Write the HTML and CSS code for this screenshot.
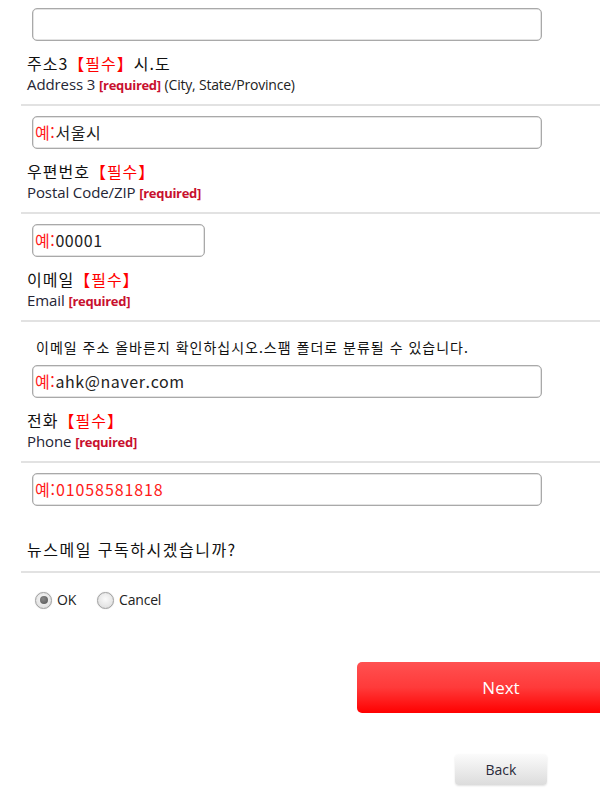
FILE: index.html
```html
<!DOCTYPE html>
<html lang="ko">
<head>
<meta charset="utf-8">
<link rel="stylesheet" href="styles.css">
</head>
<body>
<div class="page">
  <div class="field first"><div class="box wide"></div></div>
  <div class="label">
    <div class="ko">주소3<span class="req">【필수】</span>시.도</div>
    <div class="en">Address 3 <b class="req-en">[required]</b> <span class="hint">(City, State/Province)</span></div>
  </div>
  <div class="rule"></div>

  <div class="field"><div class="box wide"><span class="ex">예:</span>서울시</div></div>
  <div class="label">
    <div class="ko">우편번호<span class="req">【필수】</span></div>
    <div class="en">Postal Code/ZIP <b class="req-en">[required]</b></div>
  </div>
  <div class="rule"></div>

  <div class="field"><div class="box short"><span class="ex">예:</span>00001</div></div>
  <div class="label">
    <div class="ko">이메일<span class="req">【필수】</span></div>
    <div class="en">Email <b class="req-en">[required]</b></div>
  </div>
  <div class="rule"></div>

  <div class="note">이메일 주소 올바른지 확인하십시오.스팸 폴더로 분류될 수 있습니다.</div>
  <div class="field tight"><div class="box wide"><span class="ex">예:</span>ahk@naver.com</div></div>
  <div class="label">
    <div class="ko">전화<span class="req">【필수】</span></div>
    <div class="en">Phone <b class="req-en">[required]</b></div>
  </div>
  <div class="rule"></div>

  <div class="field"><div class="box wide red">예:01058581818</div></div>
  <div class="question">뉴스메일 구독하시겠습니까?</div>
  <div class="rule"></div>

  <div class="radios">
    <label class="opt"><span class="radio checked"></span>OK</label>
    <label class="opt"><span class="radio"></span>Cancel</label>
  </div>

  <div class="actions">
    <div class="btn-next">Next</div>
    <div class="btn-back">Back</div>
  </div>
</div>
</body>
</html>
```
FILE: styles.css
```css
html, body {
  margin: 0;
  padding: 0;
  background: #fff;
  overflow: hidden;
}
.page {
  width: 600px;
  height: 793px;
  padding-left: 21px;
  box-sizing: border-box;
  font-family: "Noto Sans CJK KR", sans-serif;
  color: #111;
  overflow: hidden;
}
.field {
  padding: 10px 0 0 11px;
}
.field.first {
  padding-top: 8px;
}
.field.tight {
  padding-top: 8px;
}
.box {
  height: 33px;
  box-sizing: border-box;
  border: 1px solid #a9a9a9;
  box-shadow: inset 0 0 0 0.5px #c8c8c8;
  border-radius: 5px;
  background: #fff;
  padding: 0 2px;
  font-size: 16px;
  line-height: 31px;
  color: #222;
  white-space: nowrap;
  letter-spacing: 0.6px;
}
.box.wide { width: 510px; }
.box.short { width: 173px; }
.box.red { color: #ff1a1a; letter-spacing: 0.9px; }
.ex { color: #ff1a1a; }
.label {
  padding: 12px 0 0 6px;
}
.ko {
  font-size: 16px;
  line-height: 21px;
  height: 21px;
  color: #111;
  letter-spacing: 1px;
}
.req { color: #ff0000; }
.en {
  font-family: "Open Sans", sans-serif;
  font-size: 15px;
  line-height: 20px;
  height: 20px;
  color: #252535;
  letter-spacing: -0.1px;
}
.req-en {
  font-size: 13px;
  color: #c8102e;
  font-weight: 700;
  letter-spacing: -0.3px;
}
.hint {
  font-size: 14px;
  color: #222;
  letter-spacing: -0.2px;
}
.rule {
  margin-top: 10px;
  height: 2px;
  background: #e2e2e2;
}
.note {
  padding: 15px 0 0 15px;
  font-size: 14px;
  line-height: 20px;
  color: #111;
  letter-spacing: 1px;
}
.question {
  padding: 31px 0 0 6px;
  font-size: 16px;
  line-height: 24px;
  color: #111;
  letter-spacing: 1.5px;
}
.radios {
  display: flex;
  gap: 21px;
  padding: 17px 0 0 14px;
  font-family: "Open Sans", sans-serif;
  font-size: 14px;
  color: #222;
}
.opt {
  display: flex;
  align-items: center;
  gap: 5px;
  line-height: 20px;
  letter-spacing: -0.2px;
}
.radio {
  width: 17px;
  height: 17px;
  box-sizing: border-box;
  border-radius: 50%;
  border: 1px solid #a0a0a0;
  background: radial-gradient(circle at 50% 40%, #fafafa 0%, #e6e6e6 60%, #d4d4d4 100%);
  box-shadow: 0 0 1px #bbb;
  position: relative;
}
.radio.checked::after {
  content: "";
  position: absolute;
  left: 3.5px;
  top: 3.5px;
  width: 8px;
  height: 8px;
  border-radius: 50%;
  background: radial-gradient(circle at 40% 35%, #888 0%, #555 100%);
}
.actions {
  margin-left: 336px;
  width: 243px;
  padding-top: 52px;
  overflow: hidden;
  display: flex;
  flex-direction: column;
  font-family: "Open Sans", sans-serif;
}
.btn-next {
  flex: none;
  width: 288px;
  height: 51px;
  border-radius: 5px 0 0 5px;
  background: linear-gradient(#ff5151, #ff3a3a 50%, #ff0000);
  color: #fff;
  font-size: 17px;
  line-height: 51px;
  text-align: center;
}
.btn-back {
  margin: 41px 0 3px 98px;
  width: 92px;
  height: 31px;
  border-radius: 4px;
  background: linear-gradient(#fbfbfb, #dcdcdc);
  box-shadow: 0 1px 2px rgba(0,0,0,0.12);
  color: #2a2a3a;
  font-size: 14px;
  line-height: 31px;
  text-align: center;
}
```
